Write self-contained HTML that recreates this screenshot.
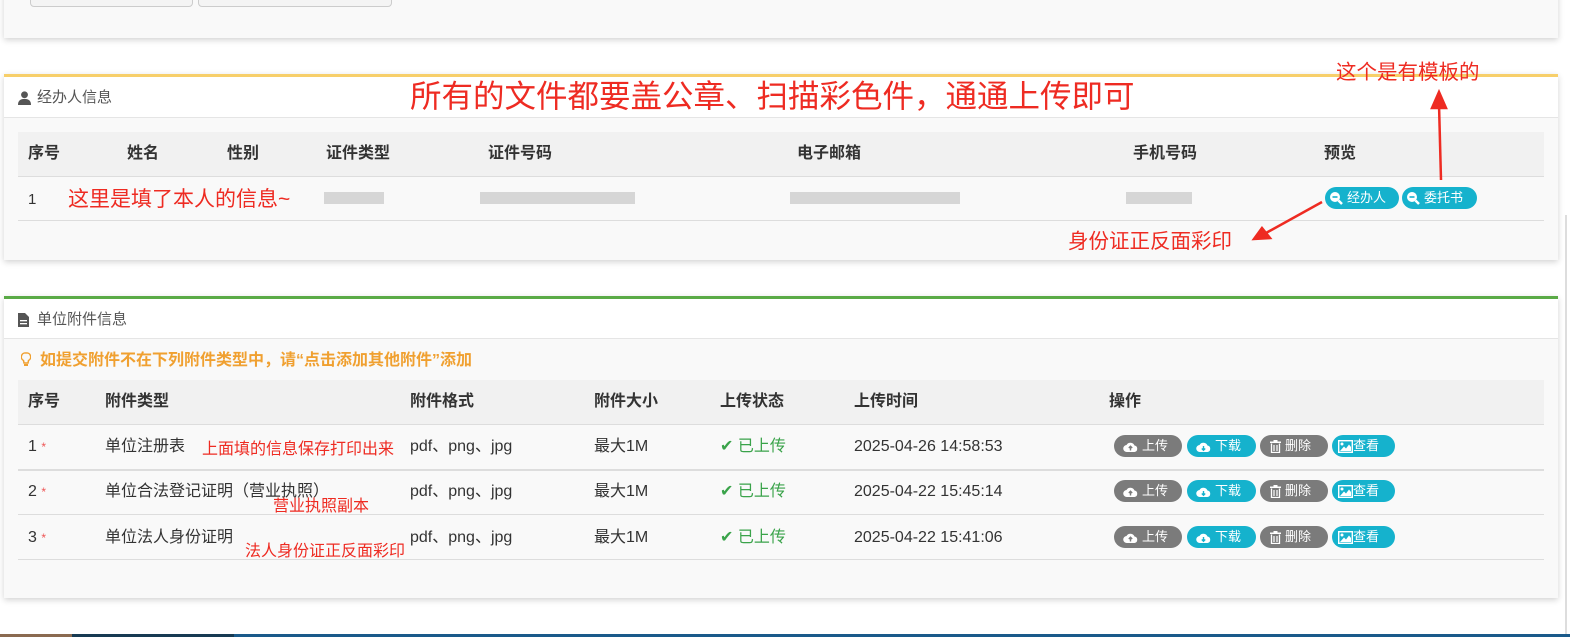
<!DOCTYPE html>
<html><head><meta charset="utf-8"><style>
*{margin:0;padding:0;box-sizing:border-box}
body{width:1570px;height:637px;position:relative;overflow:hidden;background:#fff;font-family:"Liberation Sans","Noto Sans CJK SC",sans-serif;color:#333;font-size:15px}
.a{position:absolute;white-space:nowrap;line-height:20px}
.panel{position:absolute;left:4px;width:1554px;background:#f9f9f9;box-shadow:0 2px 6px rgba(0,0,0,.18)}
.ph{position:absolute;left:0;right:0;background:#fff;border-bottom:1px solid #e5e5e5;font-size:15px;color:#555}
.th{position:absolute;background:#f1f1f1}
.line{position:absolute;height:1px;background:#ddd}
.red{color:#ee2b22}
.h{font-weight:bold;font-size:16px}
.btn{position:absolute;height:22px;border-radius:11px;color:#fff;font-size:13px;line-height:22px;padding-left:6px;white-space:nowrap}
.btn svg{vertical-align:-3px;margin-right:4px}
.g{background:#7b7b7b}.t{background:#15b2cd}
.blur{position:absolute;background:#d6d6d6;height:12px}
</style></head><body>
<div class="panel" style="top:-10px;height:48px"></div>
<div class="a" style="left:30px;top:-5px;width:163px;height:12px;border:1px solid #ccc;border-radius:4px;background:#f4f4f4"></div>
<div class="a" style="left:198px;top:-5px;width:194px;height:12px;border:1px solid #ccc;border-radius:4px;background:#f4f4f4"></div>

<div class="panel" style="top:74px;height:186px;border-top:3px solid #f7cf6a">
 <div class="ph" style="top:0;height:41px"><span class="a" style="left:33px;top:11px">经办人信息</span></div>
</div>
<svg class="a" style="left:18px;top:91px" width="13" height="14" viewBox="0 0 14 15"><circle cx="7" cy="4" r="3.7" fill="#555"/><path d="M0 15 Q0 8.5 7 8.5 Q14 8.5 14 15Z" fill="#555"/></svg>
<div class="th" style="left:18px;top:132px;width:1526px;height:44px"></div>
<div class="line" style="left:18px;top:176px;width:1526px"></div>
<div class="line" style="left:18px;top:220px;width:1526px"></div>
<div class="a h" style="left:28px;top:144px">序号</div>
<div class="a h" style="left:127px;top:144px">姓名</div>
<div class="a h" style="left:227px;top:144px">性别</div>
<div class="a h" style="left:326px;top:144px">证件类型</div>
<div class="a h" style="left:488px;top:144px">证件号码</div>
<div class="a h" style="left:797px;top:144px">电子邮箱</div>
<div class="a h" style="left:1133px;top:144px">手机号码</div>
<div class="a h" style="left:1324px;top:144px">预览</div>
<div class="a" style="left:28px;top:190px">1</div>
<div class="blur" style="left:324px;top:192px;width:60px"></div>
<div class="blur" style="left:480px;top:192px;width:155px"></div>
<div class="blur" style="left:790px;top:192px;width:170px"></div>
<div class="blur" style="left:1126px;top:192px;width:66px"></div>
<div class="a red" style="left:68px;top:188px;font-size:21px;line-height:24px">这里是填了本人的信息~</div>
<div class="btn t" style="left:1325px;top:187px;width:74px;padding-left:4px"><svg width="14" height="14" viewBox="0 0 14 14"><circle cx="6" cy="6" r="5" fill="#fff"/><rect x="3.5" y="5.2" width="5" height="1.6" fill="#15b2cd"/><path d="M9.5 9.5 L13 13" stroke="#fff" stroke-width="2.5"/></svg>经办人</div>
<div class="btn t" style="left:1402px;top:187px;width:75px;padding-left:4px"><svg width="14" height="14" viewBox="0 0 14 14"><circle cx="6" cy="6" r="5" fill="#fff"/><rect x="3.5" y="5.2" width="5" height="1.6" fill="#15b2cd"/><path d="M9.5 9.5 L13 13" stroke="#fff" stroke-width="2.5"/></svg>委托书</div>
<div class="a red" style="left:410px;top:78px;font-size:31.5px;line-height:36px">所有的文件都要盖公章、扫描彩色件，通通上传即可</div>
<div class="a red" style="left:1336px;top:61px;font-size:20.5px;line-height:24px">这个是有模板的</div>
<div class="a red" style="left:1068px;top:230px;font-size:20.5px;line-height:24px">身份证正反面彩印</div>
<svg class="a" style="left:0;top:0" width="1570" height="637"><g stroke="#ee2b22" stroke-width="2.5" fill="#ee2b22"><line x1="1441" y1="180" x2="1439" y2="104"/><path d="M1432 108 L1439 92 L1446 108Z"/><line x1="1322" y1="202" x2="1266" y2="233"/><path d="M1262 228 L1254 239 L1270 238Z"/></g></svg>

<div class="panel" style="top:296px;height:302px;border-top:3px solid #5aaa46">
 <div class="ph" style="top:0;height:40px"><span class="a" style="left:33px;top:11px">单位附件信息</span></div>
</div>
<svg class="a" style="left:18px;top:313px" width="11" height="14" viewBox="0 0 11 14"><path d="M0 0H7L11 4V14H0Z" fill="#555"/><rect x="2" y="7" width="7" height="1.3" fill="#fff"/><rect x="2" y="10" width="7" height="1.3" fill="#fff"/></svg>
<svg class="a" style="left:21px;top:352px" width="10" height="15" viewBox="0 0 10 15"><path d="M5 1 A4 4 0 0 0 2.5 8.5 L3 11 H7 L7.5 8.5 A4 4 0 0 0 5 1Z" fill="none" stroke="#f0a030" stroke-width="1.5"/><rect x="3" y="12" width="4" height="2" fill="#f0a030"/></svg>
<div class="a" style="left:40px;top:351px;color:#f0a030;font-weight:bold;font-size:16px">如提交附件不在下列附件类型中，请“点击添加其他附件”添加</div>
<div class="th" style="left:18px;top:380px;width:1526px;height:44px"></div>
<div class="line" style="left:18px;top:424px;width:1526px"></div>
<div class="line" style="left:18px;top:469px;width:1526px;height:2px"></div>
<div class="line" style="left:18px;top:514px;width:1526px"></div>
<div class="line" style="left:18px;top:559px;width:1526px"></div>
<div class="a h" style="left:28px;top:392px">序号</div>
<div class="a h" style="left:105px;top:392px">附件类型</div>
<div class="a h" style="left:410px;top:392px">附件格式</div>
<div class="a h" style="left:594px;top:392px">附件大小</div>
<div class="a h" style="left:720px;top:392px">上传状态</div>
<div class="a h" style="left:854px;top:392px">上传时间</div>
<div class="a h" style="left:1109px;top:392px">操作</div>

<div class="a" style="left:28px;top:437px;font-size:16px">1 <span style="color:#e55;font-size:12px">*</span></div>
<div class="a" style="left:105px;top:437px;font-size:16px">单位注册表</div>
<div class="a red" style="left:202px;top:440px;font-size:16px">上面填的信息保存打印出来</div>
<div class="a" style="left:28px;top:482px;font-size:16px">2 <span style="color:#e55;font-size:12px">*</span></div>
<div class="a" style="left:105px;top:482px;font-size:16px">单位合法登记证明（营业执照）</div>
<div class="a red" style="left:273px;top:497px;font-size:16px">营业执照副本</div>
<div class="a" style="left:28px;top:528px;font-size:16px">3 <span style="color:#e55;font-size:12px">*</span></div>
<div class="a" style="left:105px;top:528px;font-size:16px">单位法人身份证明</div>
<div class="a red" style="left:245px;top:542px;font-size:16px">法人身份证正反面彩印</div>

<div class="a" style="left:410px;top:437px;font-size:16px">pdf、png、jpg</div>
<div class="a" style="left:410px;top:482px;font-size:16px">pdf、png、jpg</div>
<div class="a" style="left:410px;top:528px;font-size:16px">pdf、png、jpg</div>
<div class="a" style="left:594px;top:437px;font-size:16px">最大1M</div>
<div class="a" style="left:594px;top:482px;font-size:16px">最大1M</div>
<div class="a" style="left:594px;top:528px;font-size:16px">最大1M</div>
<div class="a" style="left:720px;top:437px;font-size:16px;color:#3aa34a">✔ 已上传</div>
<div class="a" style="left:720px;top:482px;font-size:16px;color:#3aa34a">✔ 已上传</div>
<div class="a" style="left:720px;top:528px;font-size:16px;color:#3aa34a">✔ 已上传</div>
<div class="a" style="left:854px;top:437px;font-size:16px">2025-04-26 14:58:53</div>
<div class="a" style="left:854px;top:482px;font-size:16px">2025-04-22 15:45:14</div>
<div class="a" style="left:854px;top:528px;font-size:16px">2025-04-22 15:41:06</div>

<div id="b1"></div>
<div class="btn g" style="left:1114px;top:435px;width:68px;padding-left:9px"><svg width="15" height="12" viewBox="0 0 15 12"><path d="M4 11 A3.5 3.5 0 0 1 3.5 4 A4.5 4.5 0 0 1 11.5 4.5 A3.3 3.3 0 0 1 11.5 11Z" fill="#fff"/><path d="M7.5 9.5V5.5M5.8 7L7.5 5.3 9.2 7" stroke="#7b7b7b" stroke-width="1.4" fill="none"/></svg>上传</div>
<div class="btn t" style="left:1187px;top:435px;width:69px;padding-left:9px"><svg width="15" height="12" viewBox="0 0 15 12"><path d="M4 11 A3.5 3.5 0 0 1 3.5 4 A4.5 4.5 0 0 1 11.5 4.5 A3.3 3.3 0 0 1 11.5 11Z" fill="#fff"/><path d="M7.5 5V9M5.8 7.5L7.5 9.2 9.2 7.5" stroke="#15b2cd" stroke-width="1.4" fill="none"/></svg>下载</div>
<div class="btn g" style="left:1260px;top:435px;width:68px;padding-left:10px"><svg width="11" height="13" viewBox="0 0 11 13"><rect x="0" y="1.5" width="11" height="1.5" fill="#fff"/><rect x="3.5" y="0" width="4" height="2" fill="#fff"/><path d="M1.5 3.5V12.5H9.5V3.5" stroke="#fff" stroke-width="1.3" fill="none"/><path d="M4 5V11M7 5V11" stroke="#fff" stroke-width="1.2"/></svg>删除</div>
<div class="btn t" style="left:1332px;top:435px;width:63px;padding-left:6px"><svg width="15" height="13" viewBox="0 0 15 13" style="margin-right:0"><rect x="0.7" y="0.7" width="13.6" height="11.6" fill="none" stroke="#fff" stroke-width="1.4"/><circle cx="4" cy="4" r="1.5" fill="#fff"/><path d="M2 11L6 6.5 8 8.5 11 4.5 13 7V11Z" fill="#fff"/></svg>查看</div>

<div class="btn g" style="left:1114px;top:480px;width:68px;padding-left:9px"><svg width="15" height="12" viewBox="0 0 15 12"><path d="M4 11 A3.5 3.5 0 0 1 3.5 4 A4.5 4.5 0 0 1 11.5 4.5 A3.3 3.3 0 0 1 11.5 11Z" fill="#fff"/><path d="M7.5 9.5V5.5M5.8 7L7.5 5.3 9.2 7" stroke="#7b7b7b" stroke-width="1.4" fill="none"/></svg>上传</div>
<div class="btn t" style="left:1187px;top:480px;width:69px;padding-left:9px"><svg width="15" height="12" viewBox="0 0 15 12"><path d="M4 11 A3.5 3.5 0 0 1 3.5 4 A4.5 4.5 0 0 1 11.5 4.5 A3.3 3.3 0 0 1 11.5 11Z" fill="#fff"/><path d="M7.5 5V9M5.8 7.5L7.5 9.2 9.2 7.5" stroke="#15b2cd" stroke-width="1.4" fill="none"/></svg>下载</div>
<div class="btn g" style="left:1260px;top:480px;width:68px;padding-left:10px"><svg width="11" height="13" viewBox="0 0 11 13"><rect x="0" y="1.5" width="11" height="1.5" fill="#fff"/><rect x="3.5" y="0" width="4" height="2" fill="#fff"/><path d="M1.5 3.5V12.5H9.5V3.5" stroke="#fff" stroke-width="1.3" fill="none"/><path d="M4 5V11M7 5V11" stroke="#fff" stroke-width="1.2"/></svg>删除</div>
<div class="btn t" style="left:1332px;top:480px;width:63px;padding-left:6px"><svg width="15" height="13" viewBox="0 0 15 13" style="margin-right:0"><rect x="0.7" y="0.7" width="13.6" height="11.6" fill="none" stroke="#fff" stroke-width="1.4"/><circle cx="4" cy="4" r="1.5" fill="#fff"/><path d="M2 11L6 6.5 8 8.5 11 4.5 13 7V11Z" fill="#fff"/></svg>查看</div>

<div class="btn g" style="left:1114px;top:526px;width:68px;padding-left:9px"><svg width="15" height="12" viewBox="0 0 15 12"><path d="M4 11 A3.5 3.5 0 0 1 3.5 4 A4.5 4.5 0 0 1 11.5 4.5 A3.3 3.3 0 0 1 11.5 11Z" fill="#fff"/><path d="M7.5 9.5V5.5M5.8 7L7.5 5.3 9.2 7" stroke="#7b7b7b" stroke-width="1.4" fill="none"/></svg>上传</div>
<div class="btn t" style="left:1187px;top:526px;width:69px;padding-left:9px"><svg width="15" height="12" viewBox="0 0 15 12"><path d="M4 11 A3.5 3.5 0 0 1 3.5 4 A4.5 4.5 0 0 1 11.5 4.5 A3.3 3.3 0 0 1 11.5 11Z" fill="#fff"/><path d="M7.5 5V9M5.8 7.5L7.5 9.2 9.2 7.5" stroke="#15b2cd" stroke-width="1.4" fill="none"/></svg>下载</div>
<div class="btn g" style="left:1260px;top:526px;width:68px;padding-left:10px"><svg width="11" height="13" viewBox="0 0 11 13"><rect x="0" y="1.5" width="11" height="1.5" fill="#fff"/><rect x="3.5" y="0" width="4" height="2" fill="#fff"/><path d="M1.5 3.5V12.5H9.5V3.5" stroke="#fff" stroke-width="1.3" fill="none"/><path d="M4 5V11M7 5V11" stroke="#fff" stroke-width="1.2"/></svg>删除</div>
<div class="btn t" style="left:1332px;top:526px;width:63px;padding-left:6px"><svg width="15" height="13" viewBox="0 0 15 13" style="margin-right:0"><rect x="0.7" y="0.7" width="13.6" height="11.6" fill="none" stroke="#fff" stroke-width="1.4"/><circle cx="4" cy="4" r="1.5" fill="#fff"/><path d="M2 11L6 6.5 8 8.5 11 4.5 13 7V11Z" fill="#fff"/></svg>查看</div>

<div class="a" style="left:1565px;top:215px;width:2px;height:420px;background:#ddd"></div>
<div class="a" style="left:0;top:634px;width:72px;height:3px;background:#8a6a50"></div>
<div class="a" style="left:72px;top:634px;width:162px;height:3px;background:#173a52"></div>
<div class="a" style="left:234px;top:634px;width:1336px;height:3px;background:#1a5a8a"></div>
</body></html>
